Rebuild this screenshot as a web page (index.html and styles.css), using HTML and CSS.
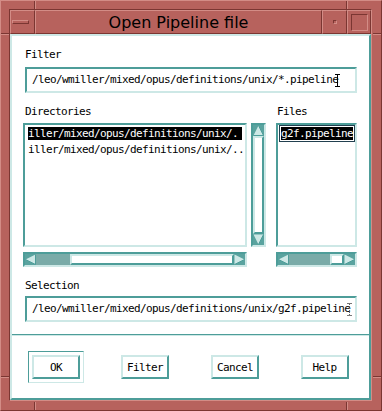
FILE: index.html
```html
<!DOCTYPE html>
<html lang="en">
<head>
    <meta charset="UTF-8">
    <title>Open Pipeline file</title>
    <link rel="stylesheet" href="styles.css">
</head>
<body>
    <div class="window">
        <!-- frame corner grooves -->
        <span class="notch v top left"></span>
        <span class="notch v top right"></span>
        <span class="notch v bottom left"></span>
        <span class="notch v bottom right"></span>
        <span class="notch h side-l upper"></span>
        <span class="notch h side-l lower"></span>
        <span class="notch h side-r upper"></span>
        <span class="notch h side-r lower"></span>

        <div class="frame">
            <div class="titlebar">
                <div class="tb-btn tb-menu"><span class="menu-bar"></span></div>
                <div class="tb-btn tb-title">Open Pipeline file</div>
                <div class="tb-btn tb-min"><span class="min-dot"></span></div>
                <div class="tb-btn tb-max"><span class="max-box"></span></div>
            </div>

            <div class="dialog">
                <div class="label">Filter</div>
                <div class="field">/leo/wmiller/mixed/opus/definitions/unix/*.pipeline<span class="ibeam"></span></div>

                <div class="lists">
                    <div class="dirs">
                        <div class="col-label">Directories</div>
                        <div class="scrolled">
                            <div class="list">
                                <div class="row selected">iller/mixed/opus/definitions/unix/.</div>
                                <div class="row">iller/mixed/opus/definitions/unix/..</div>
                            </div>
                            <div class="vscroll">
                                <div class="arrow">
                                    <svg width="11" height="11" viewBox="0 0 11 11"><polygon points="5.5,0.5 10.5,10.5 0.5,10.5" fill="#cde8e6"/><path d="M5.5 0.5 L10.5 10.5 L0.5 10.5" fill="none" stroke="#4d9d99"/></svg>
                                </div>
                                <div class="slider v-slider"></div>
                                <div class="arrow">
                                    <svg width="11" height="11" viewBox="0 0 11 11"><polygon points="0.5,0.5 10.5,0.5 5.5,10.5" fill="#cde8e6"/><path d="M10.5 0.5 L5.5 10.5" fill="none" stroke="#4d9d99"/></svg>
                                </div>
                            </div>
                        </div>
                        <div class="hscroll dir-hscroll">
                            <div class="arrow">
                                <svg width="11" height="11" viewBox="0 0 11 11"><polygon points="0.5,5.5 10.5,0.5 10.5,10.5" fill="#cde8e6"/><path d="M10.5 0.5 L10.5 10.5 L0.5 5.5" fill="none" stroke="#4d9d99"/></svg>
                            </div>
                            <div class="trough" style="width: 34px"></div>
                            <div class="slider" style="width: 164px"></div>
                            <div class="trough"></div>
                            <div class="arrow">
                                <svg width="11" height="11" viewBox="0 0 11 11"><polygon points="0.5,0.5 10.5,5.5 0.5,10.5" fill="#cde8e6"/><path d="M10.5 5.5 L0.5 10.5" fill="none" stroke="#4d9d99"/></svg>
                            </div>
                        </div>
                    </div>

                    <div class="files">
                        <div class="col-label">Files</div>
                        <div class="list files-list">
                            <div class="cursor"><div class="row selected">g2f.pipeline</div></div>
                        </div>
                        <div class="hscroll">
                            <div class="arrow">
                                <svg width="11" height="11" viewBox="0 0 11 11"><polygon points="0.5,5.5 10.5,0.5 10.5,10.5" fill="#cde8e6"/><path d="M10.5 0.5 L10.5 10.5 L0.5 5.5" fill="none" stroke="#4d9d99"/></svg>
                            </div>
                            <div class="trough" style="width: 41px"></div>
                            <div class="slider" style="width: 14px"></div>
                            <div class="trough"></div>
                            <div class="arrow">
                                <svg width="11" height="11" viewBox="0 0 11 11"><polygon points="0.5,0.5 10.5,5.5 0.5,10.5" fill="#cde8e6"/><path d="M10.5 5.5 L0.5 10.5" fill="none" stroke="#4d9d99"/></svg>
                            </div>
                        </div>
                    </div>
                </div>

                <div class="label selection-label">Selection</div>
                <div class="field selection-field">/leo/wmiller/mixed/opus/definitions/unix/g2f.pipeline<span class="ibeam dim"></span></div>

                <div class="separator"></div>

                <div class="buttons">
                    <div class="default-ring"><button class="btn">OK</button></div>
                    <button class="btn">Filter</button>
                    <button class="btn">Cancel</button>
                    <button class="btn">Help</button>
                </div>
            </div>
        </div>
    </div>
</body>
</html>
```

FILE: styles.css
```css
/* Global */
* {
    margin: 0;
    padding: 0;
    box-sizing: border-box;
}

body {
    background-color: #b7625d;
    font-family: 'DejaVu Sans Mono', 'Liberation Mono', monospace;
    font-size: 11px;
    letter-spacing: -0.62px;
    color: #000;
}

/* Window frame */
.window {
    position: relative;
    width: 382px;
    height: 411px;
    background-color: #b7625d;
    border: 1px solid;
    border-color: #d38c86 #7b3632 #7b3632 #d38c86;
    padding: 8px 9px 9px 8px;
}

.frame {
    height: 100%;
    display: flex;
    flex-direction: column;
    border: 1px solid;
    border-color: #7b3632 #d38c86 #d38c86 #7b3632;
}

.notch {
    position: absolute;
}

.notch.v {
    width: 2px;
    height: 8px;
    border-left: 1px solid #7b3632;
    border-right: 1px solid #d38c86;
}

.notch.v.top { top: 0; }
.notch.v.bottom { bottom: 0; }
.notch.v.left { left: 33px; }
.notch.v.right { left: 345px; }

.notch.h {
    height: 2px;
    width: 8px;
    border-top: 1px solid #7b3632;
    border-bottom: 1px solid #d38c86;
}

.notch.h.side-l { left: 0; }
.notch.h.side-r { right: 0; }
.notch.h.upper { top: 32px; }
.notch.h.lower { top: 375px; }

/* Title bar */
.titlebar {
    display: flex;
    height: 24px;
}

.tb-btn {
    display: flex;
    align-items: center;
    justify-content: center;
    border: 1px solid;
    border-color: #d38c86 #7b3632 #7b3632 #d38c86;
}

.tb-menu, .tb-min {
    width: 25px;
}

.tb-max {
    width: 24px;
}

.tb-title {
    flex: 1;
    font-family: 'DejaVu Sans', sans-serif;
    font-size: 16px;
    letter-spacing: 0;
    color: #000;
    padding-top: 1px;
}

.menu-bar {
    width: 17px;
    height: 4px;
    border: 1px solid;
    border-color: #d38c86 #7b3632 #7b3632 #d38c86;
    margin-right: 4px;
}

.min-dot {
    width: 4px;
    height: 4px;
    border: 1px solid;
    border-color: #7b3632 #d38c86 #d38c86 #7b3632;
}

.max-box {
    width: 17px;
    height: 17px;
    border: 1px solid;
    border-color: #7b3632 #d38c86 #d38c86 #7b3632;
}

/* Dialog body */
.dialog {
    flex: 1;
    background-color: #fff;
    border: 2px solid;
    border-color: #cde8e6 #4d9d99 #4d9d99 #cde8e6;
    display: flex;
    flex-direction: column;
    padding-top: 13px;
}

.label {
    height: 12px;
    line-height: 12px;
    margin-left: 13px;
}

.field {
    height: 26px;
    margin: 6px 12px 0 13px;
    border: 2px solid;
    border-color: #4d9d99 #cde8e6 #cde8e6 #4d9d99;
    line-height: 22px;
    padding-left: 5px;
    white-space: nowrap;
    overflow: hidden;
    display: flex;
    align-items: center;
}

.ibeam {
    display: inline-block;
    width: 5px;
    height: 13px;
    margin-left: -3px;
    border-top: 1px solid #000;
    border-bottom: 1px solid #000;
    background: linear-gradient(#000, #000) center / 1px 100% no-repeat;
}

.ibeam.dim {
    border-color: #777;
    background: repeating-linear-gradient(#666 0 1px, transparent 1px 2px) center / 1px 100% no-repeat;
}

/* Lists */
.lists {
    display: flex;
    gap: 10px;
    margin: 13px 12px 0 11px;
}

.dirs {
    width: 243px;
}

.files {
    width: 81px;
}

.col-label {
    height: 12px;
    line-height: 12px;
    margin-left: 2px;
}

.files .col-label {
    margin-left: 1px;
}

.scrolled {
    display: flex;
    gap: 4px;
    height: 124px;
    margin-top: 5px;
}

.list {
    flex: 1;
    height: 124px;
    border: 2px solid;
    border-color: #4d9d99 #cde8e6 #cde8e6 #4d9d99;
    padding: 2px 3px;
    overflow: hidden;
    white-space: nowrap;
}

.files-list {
    margin-top: 5px;
}

.row {
    height: 13px;
    line-height: 13px;
    margin-bottom: 3px;
}

.row.selected {
    background-color: #000;
    color: #fff;
}

.cursor {
    display: inline-block;
    margin: -2px;
    border: 1px solid #22404f;
    padding: 1px;
    background-color: #fff;
}

.cursor .row {
    margin-bottom: 0;
}

/* Scrollbars */
.vscroll {
    width: 15px;
    display: flex;
    flex-direction: column;
    border: 2px solid;
    border-color: #4d9d99 #cde8e6 #cde8e6 #4d9d99;
    background-color: #7aaba8;
}

.hscroll {
    height: 15px;
    margin-top: 5px;
    display: flex;
    border: 2px solid;
    border-color: #4d9d99 #cde8e6 #cde8e6 #4d9d99;
    background-color: #7aaba8;
}

.dir-hscroll {
    width: 224px;
}

.arrow {
    width: 11px;
    height: 11px;
    flex: none;
    background-color: #5aa39f;
}

.arrow svg {
    display: block;
}

.trough {
    flex: none;
}

.trough:last-of-type {
    flex: 1;
}

.slider {
    flex: none;
    background-color: #fff;
    border: 2px solid;
    border-color: #cde8e6 #4d9d99 #4d9d99 #cde8e6;
}

.v-slider {
    flex: 1;
}

/* Selection */
.selection-label {
    margin-top: 13px;
}

.selection-field {
    margin-top: 4px;
}

.separator {
    margin-top: 12px;
    height: 2px;
    border-top: 1px solid #4d9d99;
    border-bottom: 1px solid #cde8e6;
}

/* Buttons */
.buttons {
    display: grid;
    grid-template-columns: 88px 90px 90px 89px;
    justify-items: center;
    align-items: center;
    margin-top: 15px;
    height: 32px;
}

.default-ring {
    width: 56px;
    height: 32px;
    padding: 3px;
    border: 1px solid;
    border-color: #4d9d99 #cde8e6 #cde8e6 #4d9d99;
}

.btn {
    width: 48px;
    height: 24px;
    background-color: #fff;
    border: 2px solid;
    border-color: #cde8e6 #4d9d99 #4d9d99 #cde8e6;
    font-family: 'DejaVu Sans Mono', 'Liberation Mono', monospace;
    font-size: 11px;
    letter-spacing: -0.62px;
    color: #000;
    cursor: pointer;
}
```
